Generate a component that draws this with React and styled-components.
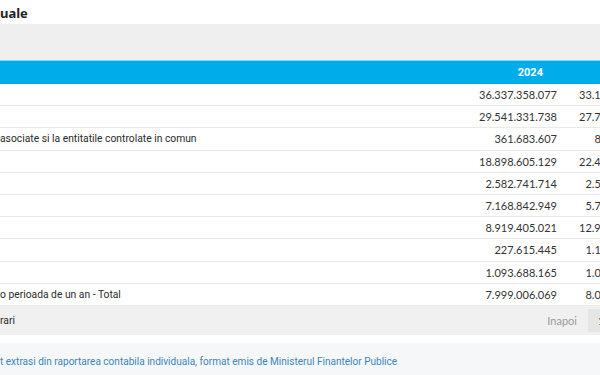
import React from 'react';
import styled, { createGlobalStyle } from 'styled-components';

const GlobalStyle = createGlobalStyle`
  body {
    margin: 0;
    overflow: hidden;
    background: #fff;
    font-family: Roboto, "Noto Sans", sans-serif;
  }
`;

const Page = styled.div`
  width: 665px;
`;

const Title = styled.h2`
  margin: 0;
  height: 24px;
  padding-top: 6px;
  box-sizing: border-box;
  font-family: "Noto Sans", sans-serif;
  font-size: 13px;
  font-weight: 700;
  color: #222;
  line-height: 14px;
`;

const Toolbar = styled.div`
  height: 36px;
  background: #efefef;
  display: flex;
  align-items: center;
  justify-content: flex-end;
  padding-right: 57px;
  font-size: 12px;
  color: #333;
`;

const HeadRow = styled.div`
  display: grid;
  grid-template-columns: 1fr 100px 100px;
  height: 23px;
  background: #00adeb;
  border-top: 1px solid #7fd8f6;
  align-items: center;
  font-family: Roboto, "Noto Sans", sans-serif;
  font-weight: 700;
  font-size: 11px;
  color: #fff;
`;

const HeadCell = styled.div`
  text-align: right;
  padding-right: 22px;
`;

const Row = styled.div`
  display: grid;
  grid-template-columns: 1fr 100px 100px;
  height: 22.2px;
  box-sizing: border-box;
  border-bottom: 1px solid #e9e9e9;
  align-items: center;
  background: #fff;
`;

const Label = styled.div`
  font-size: 10.3px;
  color: #2a2a2a;
  white-space: nowrap;
`;

const Num = styled.div`
  font-family: Lato, "Noto Sans", sans-serif;
  font-size: 11px;
  color: #333;
  text-align: right;
  padding-right: 8px;
  white-space: nowrap;
`;

const Pager = styled.div`
  height: 29px;
  background: #f0f0f0;
  display: flex;
  align-items: center;
  font-size: 10.3px;
  color: #2a2a2a;
`;

const PagerLabel = styled.div`
  flex: 1;
`;

const PagerLink = styled.div`
  font-family: Lato, sans-serif;
  color: #999;
  font-size: 11px;
  padding-right: 11px;
`;

const PageBox = styled.div`
  height: 23px;
  width: 30px;
  background: #e5e6e6;
  display: flex;
  align-items: center;
  padding-left: 10px;
  box-sizing: border-box;
  margin-right: 47px;
  font-family: Lato, sans-serif;
  font-size: 11px;
  color: #333;
`;

const Source = styled.div`
  margin-top: 8px;
  height: 40px;
  background: #f6f7f8;
  padding-top: 13px;
  box-sizing: border-box;
  font-size: 10.05px;
  color: #3a86bb;
  white-space: nowrap;
`;

const rows = [
  ['', '36.337.358.077', '33.155.212.460'],
  ['', '29.541.331.738', '27.791.504.112'],
  ['asociate si la entitatile controlate in comun', '361.683.607', '869.918.245'],
  ['', '18.898.605.129', '22.485.115.780'],
  ['', '2.582.741.714', '2.556.308.109'],
  ['', '7.168.842.949', '5.798.170.463'],
  ['', '8.919.405.021', '12.956.370.002'],
  ['', '227.615.445', '1.180.040.556'],
  ['', '1.093.688.165', '1.031.660.118'],
  ['o perioada de un an - Total', '7.999.006.069', '8.056.912.306'],
];

export default function App() {
  return (
    <Page>
      <GlobalStyle />
      <Title>uale</Title>
      <Toolbar>C</Toolbar>
      <HeadRow>
        <div />
        <HeadCell>2024</HeadCell>
        <HeadCell>2023</HeadCell>
      </HeadRow>
      {rows.map(([label, a, b], i) => (
        <Row key={i}>
          <Label>{label}</Label>
          <Num>{a}</Num>
          <Num>{b}</Num>
        </Row>
      ))}
      <Pager>
        <PagerLabel>rari</PagerLabel>
        <PagerLink>Inapoi</PagerLink>
        <PageBox>1</PageBox>
      </Pager>
      <Source>
        t extrasi din raportarea contabila individuala, format emis de Ministerul Finantelor Publice
      </Source>
    </Page>
  );
}
